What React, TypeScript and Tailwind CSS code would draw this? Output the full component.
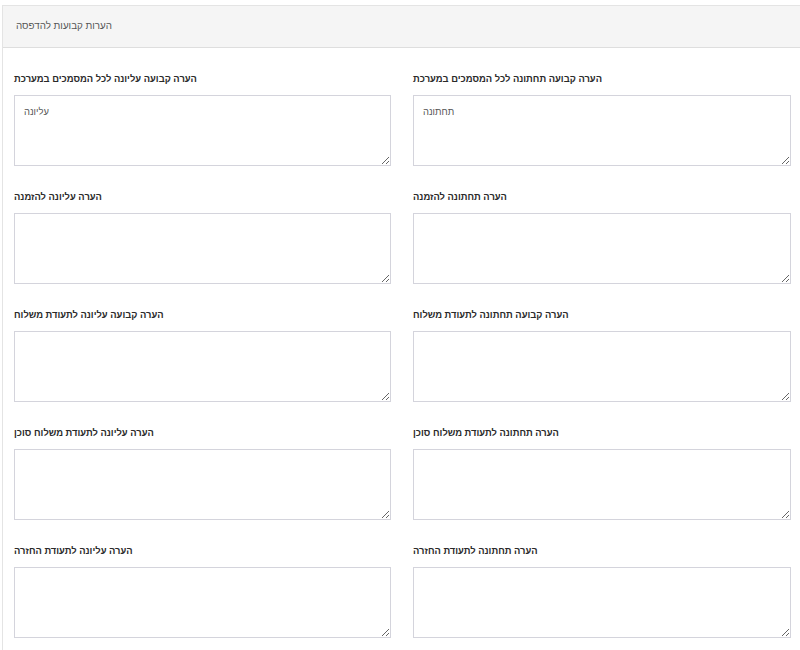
import React from "react";

const rows: [string, string, string, string][] = [
  ["הערה קבועה עליונה לכל המסמכים במערכת", "עליונה", "הערה קבועה תחתונה לכל המסמכים במערכת", "תחתונה"],
  ["הערה עליונה להזמנה", "", "הערה תחתונה להזמנה", ""],
  ["הערה קבועה עליונה לתעודת משלוח", "", "הערה קבועה תחתונה לתעודת משלוח", ""],
  ["הערה עליונה לתעודת משלוח סוכן", "", "הערה תחתונה לתעודת משלוח סוכן", ""],
  ["הערה עליונה לתעודת החזרה", "", "הערה תחתונה לתעודת החזרה", ""],
];

function Field({ label, value }: { label: string; value: string }) {
  return (
    <div className="flex flex-col">
      <label className="block pt-[1px] text-[9.4px] leading-[16px] font-bold text-[#2a2a2a] mb-[8px]">{label}</label>
      <textarea
        defaultValue={value}
        className="block w-full h-[71px] border border-[#d4d4dc] bg-white px-[9px] py-[9px] text-[9.4px] leading-[14px] text-[#555] outline-none"
        style={{ fontFamily: '"Liberation Sans", Arial, sans-serif' }}
      />
    </div>
  );
}

export default function App() {
  return (
    <div
      className="w-[800px] h-[650px] bg-white overflow-hidden pt-[5px] pl-[2px]"
      style={{ fontFamily: '"Liberation Sans", Arial, sans-serif' }}
    >
      <div className="w-[810px] h-[700px] border-l border-t border-[#e4e4e4] bg-white">
        <div className="h-[42px] bg-[#f5f5f5] border-b border-[#dedede] flex items-center pl-[13px] text-[9.8px] text-[#555]">
          הערות קבועות להדפסה
        </div>
        <div className="pl-[11px] pt-[22px] grid grid-cols-[377px_378px] gap-x-[22px] gap-y-[22px]">
          {rows.map((r, i) => (
            <React.Fragment key={i}>
              <Field label={r[0]} value={r[1]} />
              <Field label={r[2]} value={r[3]} />
            </React.Fragment>
          ))}
        </div>
      </div>
    </div>
  );
}
